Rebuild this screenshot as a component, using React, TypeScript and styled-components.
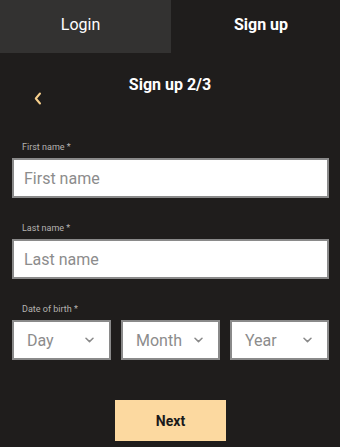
import { createGlobalStyle } from 'styled-components';
import styled from 'styled-components';

const GlobalStyle = createGlobalStyle`
  html, body {
    margin: 0;
    padding: 0;
    background: #1f1d1c;
    font-family: Roboto, 'Liberation Sans', sans-serif;
  }
  * { box-sizing: border-box; }
`;

const ChevronDown = () => (
  <svg width="9" height="6" viewBox="0 0 9 6" fill="none">
    <path d="M1 1.2l3.5 3.4L8 1.2" stroke="#8a8a8a" strokeWidth="1.5" strokeLinecap="round" strokeLinejoin="round" />
  </svg>
);

const ChevronLeft = () => (
  <svg width="8" height="13" viewBox="0 0 8 13" fill="none">
    <path d="M6 1.5L1.8 6.5 6 11.5" stroke="#f6cf8c" strokeWidth="2" strokeLinecap="round" strokeLinejoin="round" />
  </svg>
);

export default function App() {
  return (
    <>
      <GlobalStyle />
      <Page>
        <Tabs>
          <Tab $offset={-10}>Login</Tab>
          <Tab $active $offset={11}>Sign up</Tab>
        </Tabs>

        <Header>
          <BackButton aria-label="Back">
            <ChevronLeft />
          </BackButton>
          <Title>Sign up 2/3</Title>
          <div />
        </Header>

        <Form>
          <Field>
            <Label>First name *</Label>
            <Input placeholder="First name" />
          </Field>
          <Field>
            <Label>Last name *</Label>
            <Input placeholder="Last name" />
          </Field>
          <Field>
            <Label>Date of birth *</Label>
            <SelectRow>
              {['Day', 'Month', 'Year'].map((p) => (
                <SelectBox key={p}>
                  <span>{p}</span>
                  <ChevronDown />
                </SelectBox>
              ))}
            </SelectRow>
          </Field>
          <NextButton>Next</NextButton>
        </Form>
      </Page>
    </>
  );
}

const Page = styled.div`
  width: 340px;
  min-height: 447px;
  background: #1f1d1c;
  color: #fff;
`;

const Tabs = styled.div`
  display: grid;
  grid-template-columns: 171px 1fr;
  height: 53px;
`;

// $offset: extra padding on one side, to nudge the label off-centre
const Tab = styled.div<{ $active?: boolean; $offset: number }>`
  display: flex;
  align-items: center;
  justify-content: center;
  padding-bottom: 4px;
  padding-left: ${(p) => Math.max(p.$offset, 0)}px;
  padding-right: ${(p) => Math.max(-p.$offset, 0)}px;
  font-size: 16px;
  font-weight: ${(p) => (p.$active ? 700 : 400)};
  background: ${(p) => (p.$active ? 'transparent' : '#333231')};
  color: #fff;
`;

const Header = styled.div`
  display: grid;
  grid-template-columns: 1fr auto 1fr;
  padding: 23px 12px 0;
  height: 88px;
`;

const BackButton = styled.div`
  align-self: start;
  justify-self: start;
  margin: 16px 0 0 22px;
  display: flex;
`;

const Title = styled.div`
  font-size: 16px;
  font-weight: 700;
  line-height: 18px;
`;

const Form = styled.div`
  display: flex;
  flex-direction: column;
  padding: 0 11px 0 12px;
`;

const Field = styled.div`
  display: flex;
  flex-direction: column;
  margin-bottom: 24px;
`;

const Label = styled.label`
  font-size: 9px;
  line-height: 12px;
  color: #b5b3b1;
  margin: 0 0 5px 10px;
`;

const Input = styled.input`
  height: 40px;
  border: 2px solid #8a8a8a;
  background: #fff;
  padding: 0 10px;
  font-family: Roboto, 'Liberation Sans', sans-serif;
  font-size: 16px;
  color: #333;
  outline: none;
  &::placeholder {
    color: #8c8c8c;
  }
`;

const SelectRow = styled.div`
  display: grid;
  grid-template-columns: repeat(3, 1fr);
  gap: 10px;
`;

const SelectBox = styled.div`
  height: 40px;
  border: 2px solid #8a8a8a;
  background: #fff;
  display: flex;
  align-items: center;
  justify-content: space-between;
  padding: 0 15px 0 13px;
  font-size: 16px;
  color: #8c8c8c;
`;

const NextButton = styled.button`
  align-self: center;
  width: 111px;
  height: 41px;
  margin: 16px 0 0;
  border: none;
  background: #fcd9a0;
  color: #1a1a1a;
  font-family: Roboto, 'Liberation Sans', sans-serif;
  font-size: 14px;
  font-weight: 700;
`;
